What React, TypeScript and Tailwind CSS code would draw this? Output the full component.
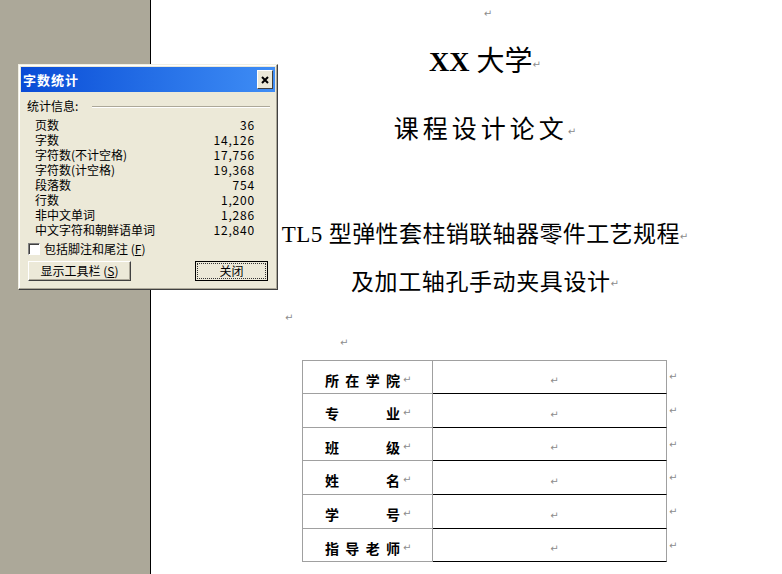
import React from 'react';

const stats: [string, string][] = [
  ['页数', '36'],
  ['字数', '14,126'],
  ['字符数(不计空格)', '17,756'],
  ['字符数(计空格)', '19,368'],
  ['段落数', '754'],
  ['行数', '1,200'],
  ['非中文单词', '1,286'],
  ['中文字符和朝鲜语单词', '12,840'],
];

const rows = [
  { label: ['所', '在', '学', '院'], h: 'h-[34px]' },
  { label: ['专', '业'], h: 'h-[34px]' },
  { label: ['班', '级'], h: 'h-[33px]' },
  { label: ['姓', '名'], h: 'h-[34px]' },
  { label: ['学', '号'], h: 'h-[34px]' },
  { label: ['指', '导', '老', '师'], h: 'h-[33px]' },
];

const Mark = ({ className = '' }: { className?: string }) => (
  <span className={`font-['DejaVu_Sans'] text-[10px] leading-none font-normal text-[#8c8c8c] ${className}`}>↵</span>
);

const WordCountDialog: React.FC = () => (
  <div className="absolute left-[18px] top-[64px] w-[260px] h-[226px] bg-[#ece9d8] border border-t-[#f1efe2] border-l-[#f1efe2] border-r-[#404040] border-b-[#404040] shadow-[inset_-1px_-1px_#aca899,inset_1px_1px_#ffffff] p-[2px] flex flex-col font-['Noto_Sans_CJK_SC',sans-serif] text-[12px] text-black">
    {/* Title bar */}
    <div className="h-[25px] flex items-center justify-between pl-[2px] pr-[2px] bg-gradient-to-r from-[#0a4bd6] to-[#3f8df5]">
      <span className="text-white font-bold text-[13px] tracking-[1px] leading-none">字数统计</span>
      <button className="w-[16px] h-[19px] flex items-center justify-center bg-[#ece9d8] border border-t-white border-l-white border-r-[#404040] border-b-[#404040]">
        <svg width="8" height="8" viewBox="0 0 8 8">
          <path d="M1 1 L7 7 M7 1 L1 7" stroke="#000" strokeWidth="2" />
        </svg>
      </button>
    </div>

    {/* Body */}
    <div className="flex flex-col pl-[6px] pr-[5px] pt-[7px]">
      <div className="h-[14px] flex items-center">
        <span className="leading-[14px]">统计信息:</span>
        <div className="flex-1 ml-[14px] mt-[1px] h-[2px] border-t border-t-[#aca899] border-b border-b-white" />
      </div>

      <div className="mt-[4px] flex flex-col pl-[8px] pr-[15px]">
        {stats.map(([label, value]) => (
          <div key={label} className="h-[15px] flex items-center justify-between leading-[15px]">
            <span>{label}</span>
            <span className="tracking-[0.8px]">{value}</span>
          </div>
        ))}
      </div>

      <div className="mt-[4px] h-[15px] flex items-center pl-[1px]">
        <span className="w-[12px] h-[12px] bg-white border border-t-[#808080] border-l-[#808080] border-r-white border-b-white shadow-[inset_1px_1px_#404040]" />
        <span className="ml-[4px] leading-[15px]">
          包括脚注和尾注 (<u>F</u>)
        </span>
      </div>

      <div className="mt-[5px] flex items-center justify-between pl-[1px] pr-[2px]">
        <button className="w-[103px] h-[20px] flex items-center justify-center bg-[#ece9d8] border border-t-white border-l-white border-r-[#404040] border-b-[#404040] shadow-[inset_-1px_-1px_#aca899] leading-none">
          显示工具栏 (<u>S</u>)
        </button>
        <button className="w-[73px] h-[20px] p-[1px] bg-[#ece9d8] border border-black">
          <div className="w-full h-full flex items-center justify-center border border-dotted border-[#333] leading-none">
            关闭
          </div>
        </button>
      </div>
    </div>
  </div>
);

const App: React.FC = () => {
  return (
    <div className="relative w-full h-[574px] overflow-hidden flex bg-white font-['Liberation_Serif','Noto_Sans_CJK_SC',serif] text-black">
      {/* Grey workspace left of page */}
      <div className="w-[151px] shrink-0 bg-[#aca899] border-r border-black" />

      {/* Page */}
      <div className="flex-1 pl-[134px]">
        <div className="w-[400px] flex flex-col">
          <div className="h-[28px] flex items-center justify-center pl-[6px]">
            <Mark />
          </div>

          <div className="h-[64px] flex items-center justify-center">
            <span className="text-[28px] leading-none">
              <span className="font-bold">XX</span> <span className="font-['Noto_Sans_CJK_SC',sans-serif]">大学</span>
            </span>
            <Mark className="mt-[10px]" />
          </div>

          <div className="h-[70px] flex items-center justify-center">
            <span className="text-[25px] leading-none tracking-[4px] font-['Noto_Sans_CJK_SC',sans-serif]">课程设计论文</span>
            <Mark className="mt-[10px]" />
          </div>

          <div className="h-[48px]" />

          <div className="h-[46px] flex items-center justify-center whitespace-nowrap">
            <span className="text-[23px] leading-none tracking-[0.4px]">
              TL5 <span className="font-['Noto_Sans_CJK_SC',sans-serif]">型弹性套柱销联轴器零件工艺规程</span>
            </span>
            <Mark className="mt-[8px]" />
          </div>

          <div className="h-[48px] flex items-center justify-center whitespace-nowrap">
            <span className="text-[23px] leading-none tracking-[0.6px] font-['Noto_Sans_CJK_SC',sans-serif]">及加工轴孔手动夹具设计</span>
            <Mark className="mt-[8px]" />
          </div>

          <div className="h-[28px] flex items-center">
            <Mark />
          </div>
          <div className="h-[22px] flex items-center pl-[55px]">
            <Mark />
          </div>
          <div className="h-[6px]" />

          {/* Student info table */}
          <div className="ml-[17px] flex flex-col">
            {rows.map((row, i) => (
              <div key={i} className={`flex ${row.h}`}>
                <div
                  className={`w-[131px] flex items-center pl-[22px] pt-[5px] border-l border-r border-b border-[#a0a0a0] ${i === 0 ? 'border-t' : ''}`}
                >
                  <div className="w-[75px] flex justify-between font-['Noto_Sans_CJK_SC',sans-serif] font-bold text-[14px] leading-none">
                    {row.label.map((c) => (
                      <span key={c}>{c}</span>
                    ))}
                  </div>
                  <Mark className="ml-[3px]" />
                </div>
                <div
                  className={`w-[234px] flex items-center justify-center pl-[10px] pt-[8px] border-b border-b-black border-r border-r-[#a0a0a0] ${i === 0 ? 'border-t border-t-[#a0a0a0]' : ''}`}
                >
                  <Mark />
                </div>
                <div className="pl-[2px] pt-[3px]">
                  <Mark />
                </div>
              </div>
            ))}
          </div>
        </div>
      </div>

      <WordCountDialog />
    </div>
  );
};

export default App;
